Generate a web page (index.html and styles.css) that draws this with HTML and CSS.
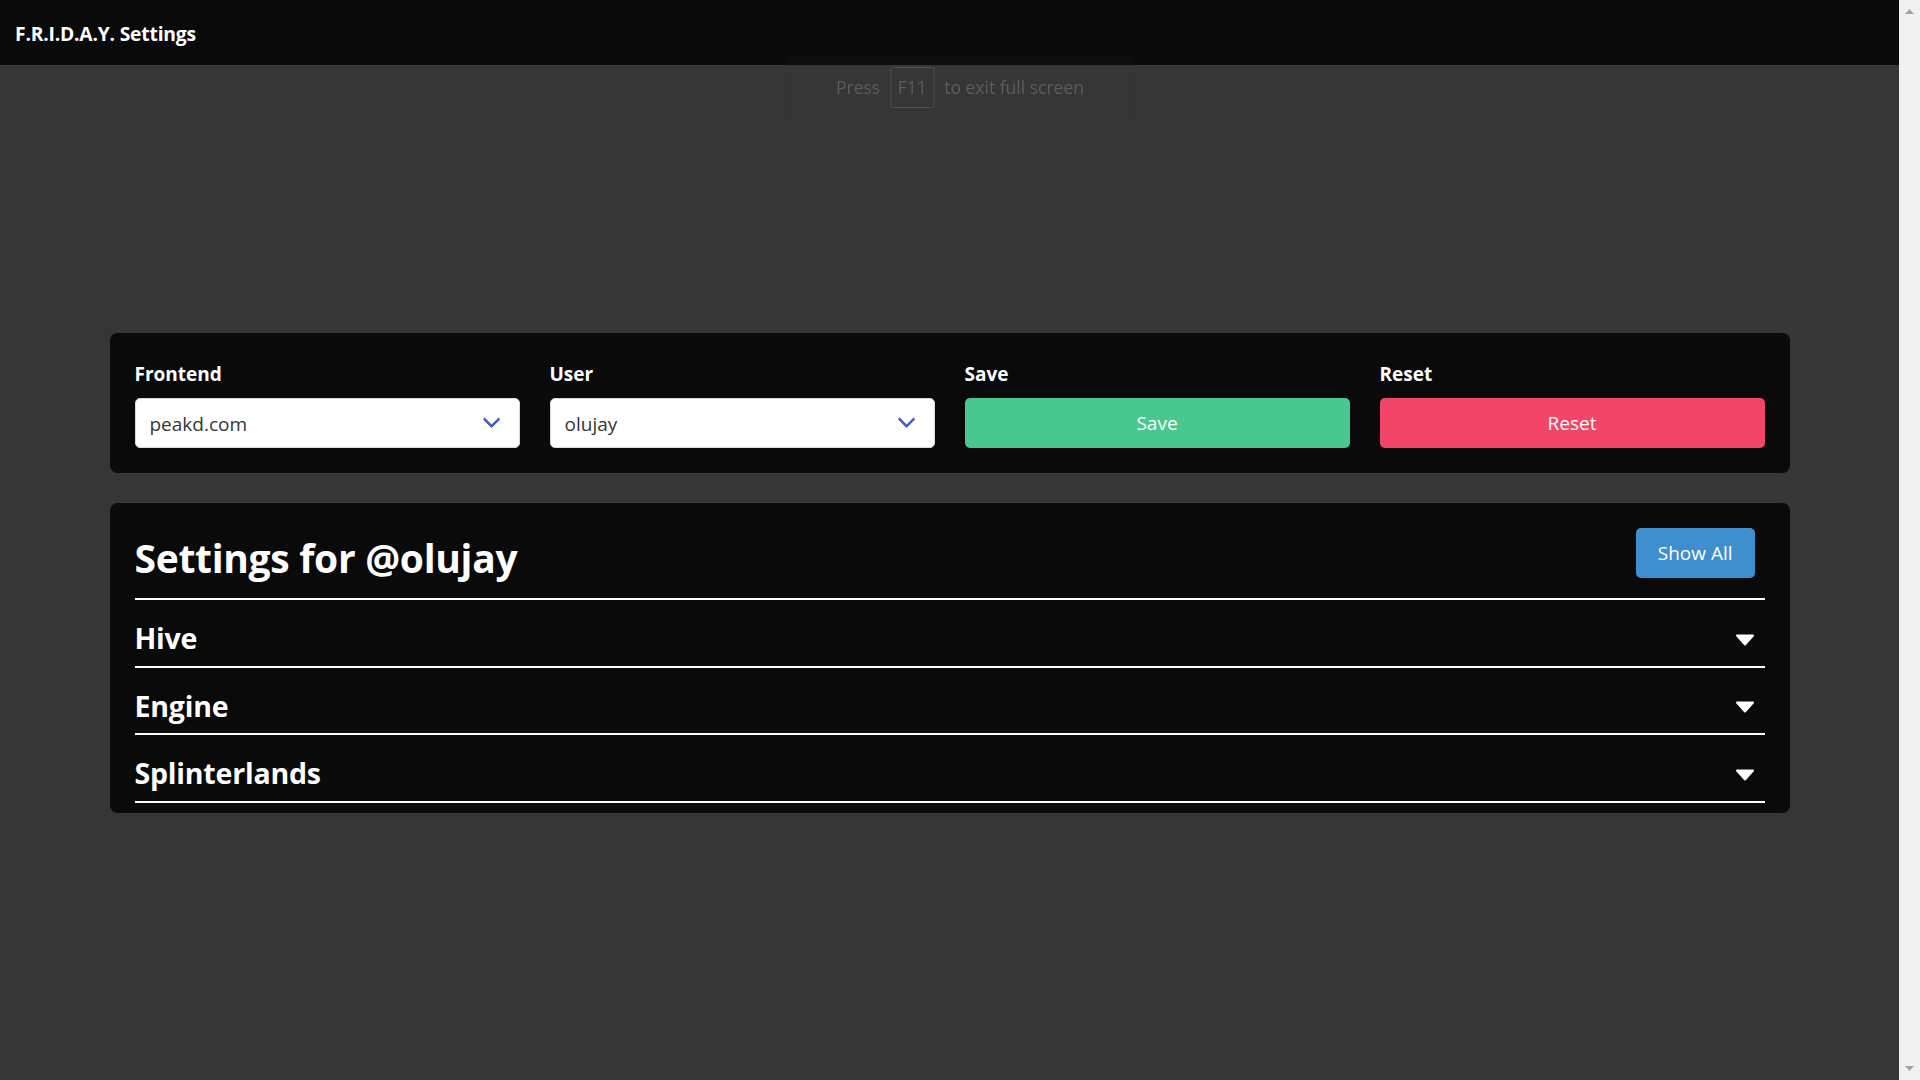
FILE: index.html
```html
<!DOCTYPE html>
<html lang="en">

<head>
  <meta charset="UTF-8">
  <title>F.R.I.D.A.Y. Settings</title>
  <link rel="stylesheet" href="styles.css">
</head>

<body>

  <div class="page">
    <nav class="navbar">
      <span class="brand">F.R.I.D.A.Y. Settings</span>
    </nav>

    <main class="content">
      <section class="box controls">
        <div class="field">
          <label for="frontend">Frontend</label>
          <div class="select">
            <select id="frontend">
              <option>peakd.com</option>
              <option>ecency.com</option>
              <option>hive.blog</option>
            </select>
          </div>
        </div>

        <div class="field">
          <label for="user">User</label>
          <div class="select">
            <select id="user">
              <option>olujay</option>
            </select>
          </div>
        </div>

        <div class="field">
          <label>Save</label>
          <button class="btn btn-save">Save</button>
        </div>

        <div class="field">
          <label>Reset</label>
          <button class="btn btn-reset">Reset</button>
        </div>
      </section>

      <section class="box settings">
        <div class="settings-head">
          <h1>Settings for @olujay</h1>
          <button class="btn btn-info">Show All</button>
        </div>

        <div class="group">
          <h2>Hive</h2>
          <span class="caret">
            <svg width="20" height="12" viewBox="0 0 20 12"><polygon points="2,1.5 18,1.5 10,10.5" /></svg>
          </span>
        </div>

        <div class="group">
          <h2>Engine</h2>
          <span class="caret">
            <svg width="20" height="12" viewBox="0 0 20 12"><polygon points="2,1.5 18,1.5 10,10.5" /></svg>
          </span>
        </div>

        <div class="group">
          <h2>Splinterlands</h2>
          <span class="caret">
            <svg width="20" height="12" viewBox="0 0 20 12"><polygon points="2,1.5 18,1.5 10,10.5" /></svg>
          </span>
        </div>
      </section>
    </main>

    <div class="fs-notice">Press <kbd>F11</kbd> to exit full screen</div>
  </div>

  <div class="scrollbar">
    <svg width="9" height="5" viewBox="0 0 9 5"><polygon points="0,5 9,5 4.5,0" /></svg>
    <svg width="9" height="5" viewBox="0 0 9 5"><polygon points="0,0 9,0 4.5,5" /></svg>
  </div>

</body>

</html>
```

FILE: styles.css
```css
html {
  font-size: 20px;
}

body {
  margin: 0;
  display: flex;
  height: 1080px;
  overflow: hidden;
  background-color: #363636;
  font-family: "Open Sans", "Noto Sans", sans-serif;
  color: #4a4a4a;
}

.page {
  flex: 1;
  min-width: 0;
}

.navbar {
  height: 65px;
  background: #0a0a0a;
  display: flex;
  align-items: center;
  padding: 0 15px;
}

.brand {
  color: white;
  font-weight: 700;
  font-size: 19.3px;
  letter-spacing: -0.2px;
  padding-top: 2px;
}

.content {
  max-width: 1680px;
  margin: 0 auto;
  padding-top: 268px;
}

.box {
  background: #0a0a0a;
  border-radius: 7.5px;
  padding: 25px;
  margin-bottom: 30px;
}

.controls {
  display: grid;
  grid-template-columns: repeat(4, 1fr);
  column-gap: 30px;
}

.field label {
  display: block;
  color: white;
  font-weight: 700;
  font-size: 19px;
  line-height: 30px;
  margin-bottom: 9px;
  padding-top: 1px;
}

.select {
  position: relative;
}

.select select {
  appearance: none;
  -webkit-appearance: none;
  width: 100%;
  height: 50px;
  border: 1px solid #dbdbdb;
  border-radius: 5px;
  background: white;
  font-family: inherit;
  font-size: 19px;
  color: #363636;
  padding: 1px 45px 0 14px;
  outline: none;
}

.select::after {
  content: "";
  position: absolute;
  right: 22px;
  top: 50%;
  width: 12.5px;
  height: 12.5px;
  margin-top: -10px;
  box-sizing: border-box;
  border: 3px solid #485fc7;
  border-right: 0;
  border-top: 0;
  border-radius: 2px;
  transform: rotate(-45deg);
  pointer-events: none;
}

.btn {
  height: 50px;
  border: 0;
  border-radius: 5px;
  color: white;
  font-family: inherit;
  font-size: 19px;
  cursor: pointer;
}

.btn-save {
  width: 100%;
  background-color: #48c78e;
}

.btn-reset {
  width: 100%;
  background-color: #f14668;
}

.btn-info {
  background-color: #3e8ed0;
  padding: 0 22px;
  margin-right: 10px;
}

.settings {
  padding: 25px 25px 10px;
}

.settings-head {
  display: flex;
  justify-content: space-between;
  align-items: flex-start;
  padding-bottom: 20px;
  border-bottom: 2px solid white;
}

.settings-head h1 {
  margin: 0;
  color: white;
  font-size: 39px;
  font-weight: 700;
  line-height: 41px;
  padding-top: 9px;
  letter-spacing: -0.3px;
}

.group {
  display: flex;
  justify-content: space-between;
  align-items: center;
  padding: 21px 0 10.5px;
  border-bottom: 2px solid white;
}

.group h2 {
  margin: 0;
  color: white;
  font-size: 28.5px;
  line-height: 34px;
  font-weight: 700;
  letter-spacing: -0.2px;
}

.caret {
  width: 40px;
  display: flex;
  justify-content: center;
  padding-top: 3px;
}

.caret polygon {
  fill: white;
  stroke: white;
  stroke-width: 2;
  stroke-linejoin: round;
}

.fs-notice {
  position: fixed;
  top: 55px;
  left: 50%;
  transform: translateX(-50%);
  width: 345px;
  height: 64px;
  display: flex;
  align-items: center;
  justify-content: center;
  gap: 10px;
  background: rgba(70, 70, 70, 0.08);
  border-radius: 4px;
  color: #5c5c5c;
  font-size: 17.5px;
}

.fs-notice kbd {
  font-family: inherit;
  font-size: 17.5px;
  border: 1px solid #505050;
  border-radius: 2px;
  width: 44px;
  height: 41px;
  display: flex;
  align-items: center;
  justify-content: center;
  box-sizing: border-box;
}

.scrollbar {
  width: 21px;
  background: #f1f1f1;
  display: flex;
  flex-direction: column;
  justify-content: space-between;
  align-items: center;
  padding: 9px 0;
  box-sizing: border-box;
}

.scrollbar polygon {
  fill: #a3a3a3;
}
```
